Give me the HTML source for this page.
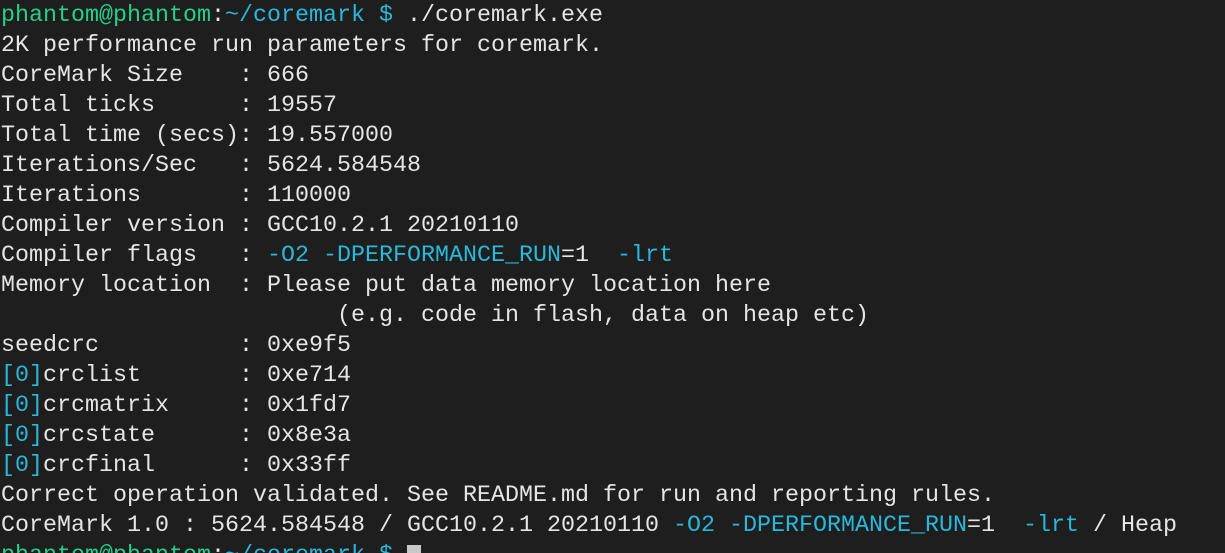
<!DOCTYPE html><html><head><style>
html,body{margin:0;padding:0;background:#1e1e1e;width:1225px;height:553px;overflow:hidden}
pre{margin:0;padding:0 0 0 1px;font-family:"Liberation Mono",monospace;font-size:23.33px;line-height:30px;color:#e5e5e5;position:relative;top:1px;white-space:pre}
.g{color:#23d18b}.b{color:#29b8db}
.c{display:inline-block;width:14px;height:20px;background:#c8c8c8;vertical-align:-4px}
</style></head><body><pre><span class="g">phantom@phantom</span>:<span class="b">~/coremark $</span> ./coremark.exe
2K performance run parameters for coremark.
CoreMark Size    : 666
Total ticks      : 19557
Total time (secs): 19.557000
Iterations/Sec   : 5624.584548
Iterations       : 110000
Compiler version : GCC10.2.1 20210110
Compiler flags   : <span class="b">-O2 -DPERFORMANCE_RUN</span>=1  <span class="b">-lrt</span>
Memory location  : Please put data memory location here
                        (e.g. code in flash, data on heap etc)
seedcrc          : 0xe9f5
<span class="b">[0]</span>crclist       : 0xe714
<span class="b">[0]</span>crcmatrix     : 0x1fd7
<span class="b">[0]</span>crcstate      : 0x8e3a
<span class="b">[0]</span>crcfinal      : 0x33ff
Correct operation validated. See README.md for run and reporting rules.
CoreMark 1.0 : 5624.584548 / GCC10.2.1 20210110 <span class="b">-O2 -DPERFORMANCE_RUN</span>=1  <span class="b">-lrt</span> / Heap
<span class="g">phantom@phantom</span>:<span class="b">~/coremark $</span> <span class="c"></span></pre></body></html>
